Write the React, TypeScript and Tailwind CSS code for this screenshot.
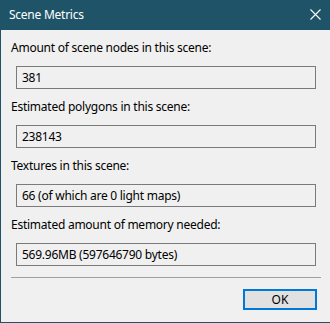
import React from "react";

const font = { fontFamily: '"Noto Sans", "Open Sans", sans-serif' };

function Field({ label, value }: { label: string; value: string }) {
  return (
    <div className="flex flex-col">
      <div className="h-[16px] leading-[16px] text-[12px] tracking-[-0.25px] text-black pl-[10px] whitespace-nowrap">{label}</div>
      <div className="mt-[10px] ml-[15px] w-[300px] h-[23px] border border-[#7a7a7a] bg-[#f0f0f0] flex items-center pl-[5px] text-[12px] tracking-[-0.25px] text-black whitespace-nowrap">
        {value}
      </div>
    </div>
  );
}

export default function App() {
  return (
    <div className="w-[330px] h-[323px] bg-[#f0f0f0] flex flex-col overflow-hidden" style={font}>
      <div className="h-[30px] bg-[#1f5468] flex items-center justify-between pl-[9px] pr-[9px] shrink-0">
        <span className="text-white text-[12px] leading-[16px] tracking-[-0.25px]">Scene Metrics</span>
        <svg width="11" height="11" viewBox="0 0 11 11" className="mt-[-1px]">
          <path d="M0.5 0.5 L10.5 10.5 M10.5 0.5 L0.5 10.5" stroke="#ffffff" strokeWidth="1.1" />
        </svg>
      </div>
      <div className="flex-1 flex flex-col border-l border-b border-[#1f5468]">
        <div className="flex flex-col gap-[10px] pt-[10px]">
          <Field label="Amount of scene nodes in this scene:" value="381" />
          <Field label="Estimated polygons in this scene:" value="238143" />
          <Field label="Textures in this scene:" value="66 (of which are 0 light maps)" />
          <Field label="Estimated amount of memory needed:" value="569.96MB (597646790 bytes)" />
        </div>
        <div className="mt-[11px] ml-[10px] w-[310px] h-px bg-[#a0a0a0]" />
        <div className="mt-[11px] ml-[242px] w-[74px] h-[21px] border-2 border-[#0078d7] bg-[#e1e1e1] flex items-center justify-center text-[12px] text-black">
          OK
        </div>
      </div>
    </div>
  );
}
